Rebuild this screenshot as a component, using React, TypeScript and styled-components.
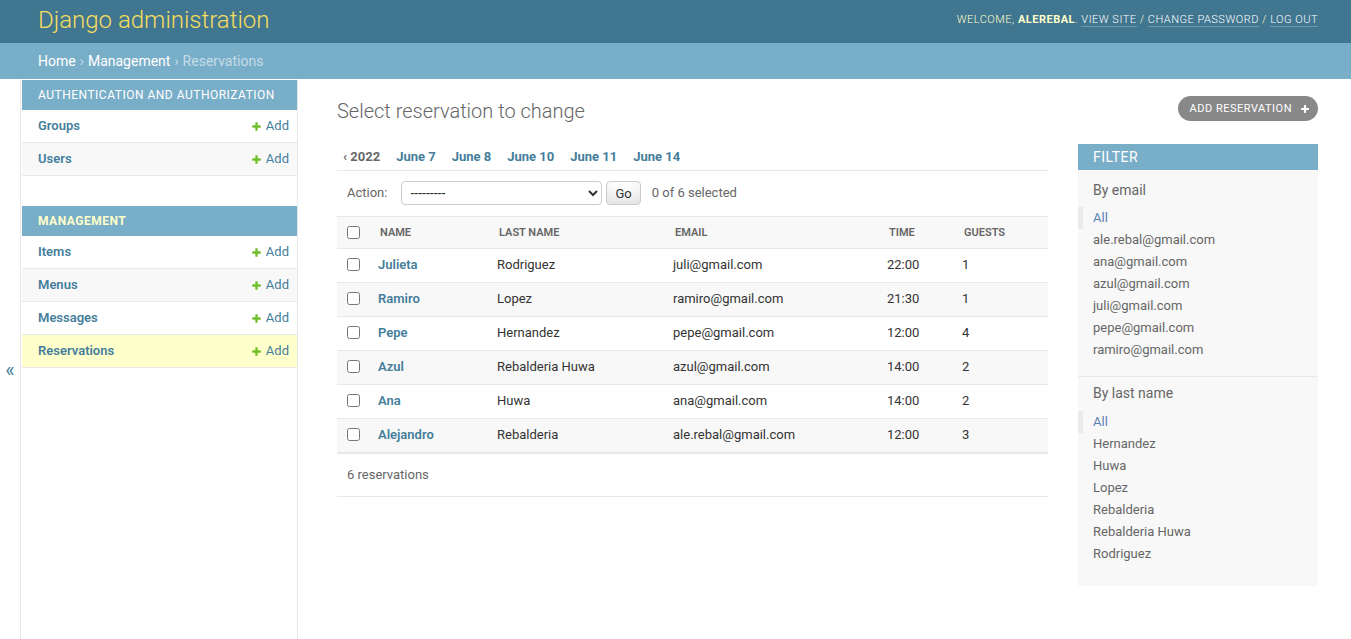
import React from 'react';
import styled, { createGlobalStyle } from 'styled-components';

const GlobalStyle = createGlobalStyle`
  html, body { margin: 0; padding: 0; }
  body {
    font-family: Roboto, "Lucida Grande", "DejaVu Sans", Verdana, Arial, sans-serif;
    font-size: 14px;
    color: #333;
    background: #fff;
  }
  * { box-sizing: border-box; }
  a { text-decoration: none; }
`;

const Header = styled.header`
  display: flex;
  justify-content: space-between;
  align-items: center;
  height: 43px;
  padding: 0 33px 4px 38px;
  background: #417690;
`;

const Brand = styled.h1`
  margin: 0;
  font-size: 24px;
  font-weight: 300;
  line-height: 28px;
  color: #f5dd5d;
`;

const UserTools = styled.div`
  font-size: 11px;
  font-weight: 300;
  letter-spacing: 0.5px;
  text-transform: uppercase;
  color: #ffc;
  line-height: 14px;
`;

const UserName = styled.strong`
  font-weight: 700;
  color: #ffc;
`;

const ToolLink = styled.a`
  color: #fff;
  border-bottom: 1px solid rgba(255, 255, 255, 0.25);
`;

const Breadcrumbs = styled.nav`
  display: flex;
  align-items: center;
  height: 36px;
  padding: 0 38px;
  background: #79aec8;
  color: #c4dce8;
  font-size: 14px;
`;

const Crumb = styled.a`
  color: #fff;
`;

const Sep = styled.span`
  margin: 0 4px;
  color: #c4dce8;
`;

const Main = styled.div`
  display: flex;
  min-height: calc(100vh - 79px);
`;

const Toggle = styled.button`
  flex: 0 0 21px;
  width: 21px;
  border: 0;
  border-right: 1px solid #e8e8e8;
  background: #fff;
  color: #447e9b;
  font-family: Roboto, sans-serif;
  font-size: 20px;
  padding: 22px 0 0 0;
  display: flex;
  align-items: center;
  justify-content: center;
`;

const NavSidebar = styled.nav`
  flex: 0 0 276px;
  margin-left: 1px;
  border-top: 1px solid transparent;
  border-right: 1px solid #e8e8e8;
`;

const Module = styled.div`
  margin-bottom: 30px;
`;

const Caption = styled.div<{ $current?: boolean }>`
  padding: 8px 16px;
  font-size: 12px;
  line-height: 14px;
  letter-spacing: 0.5px;
  text-transform: uppercase;
  white-space: nowrap;
  background: #79aec8;
  color: ${p => (p.$current ? '#ffc' : '#fff')};
  font-weight: ${p => (p.$current ? 700 : 400)};
`;

const NavRow = styled.div<{ $bg: string }>`
  display: flex;
  justify-content: space-between;
  align-items: center;
  padding: 8px 8px 8px 16px;
  line-height: 16px;
  font-size: 13px;
  border-bottom: 1px solid #e8e8e8;
  background: ${p => p.$bg};
`;

const ModelLink = styled.a`
  color: #447e9b;
  font-weight: 600;
`;

const AddLink = styled.a`
  display: inline-flex;
  align-items: center;
  gap: 4px;
  color: #447e9b;
`;

const Content = styled.main`
  flex: 1;
  min-width: 0;
  padding: 20px 33px 20px 39px;
`;

const TitleRow = styled.div`
  display: flex;
  justify-content: space-between;
  align-items: flex-start;
  margin-bottom: 21px;
`;

const Title = styled.h1`
  margin: 0;
  font-size: 20px;
  font-weight: 300;
  line-height: 24px;
  color: #666;
`;

const ObjectTool = styled.a`
  display: flex;
  align-items: center;
  gap: 8px;
  margin-top: -3px;
  height: 25px;
  padding: 0 8px 0 12px;
  border-radius: 15px;
  background: #888;
  color: #fff;
  font-size: 11px;
  letter-spacing: 0.5px;
  text-transform: uppercase;
`;

const Changelist = styled.div`
  display: flex;
  align-items: flex-start;
`;

const ListArea = styled.div`
  flex: 1;
  min-width: 0;
`;

const Toplinks = styled.ul`
  display: flex;
  gap: 16px;
  margin: 0;
  padding: 5px 6px 5px;
  list-style: none;
  line-height: 16px;
  font-size: 13px;
  font-weight: 700;
  border-bottom: 1px solid #e8e8e8;
`;

const DateLink = styled.a<{ $back?: boolean }>`
  color: ${p => (p.$back ? '#666' : '#447e9b')};
`;

const Actions = styled.div`
  display: flex;
  align-items: center;
  padding: 10px 10px 11px;
  line-height: 24px;
  font-size: 13px;
  color: #666;
`;

const ActionSelect = styled.select`
  width: 201px;
  height: 24px;
  margin-left: 14px;
  padding: 0 0 0 4px;
  border: 1px solid #ccc;
  border-radius: 4px;
  background: #fff;
  color: #333;
  font-family: Roboto, sans-serif;
  font-size: 14px;
`;

const GoButton = styled.button`
  height: 24px;
  margin-left: 4px;
  padding: 4px 8px;
  border: 1px solid #ccc;
  border-radius: 4px;
  background: #fff;
  box-shadow: 0 -15px 20px -10px rgba(0, 0, 0, 0.15) inset;
  color: #333;
  font-family: Roboto, sans-serif;
  font-size: 13px;
  line-height: 1;
`;

const Counter = styled.span`
  margin-left: 11px;
`;

const Table = styled.table`
  width: 100%;
  border-collapse: collapse;
  table-layout: fixed;
`;

const HeadCell = styled.th<{ $w: number; $center?: boolean }>`
  width: ${p => p.$w}px;
  height: 32px;
  padding: 0 10px;
  background: #f8f8f8;
  border-top: 1px solid #e8e8e8;
  border-bottom: 1px solid #e8e8e8;
  color: #666;
  font-size: 11px;
  font-weight: 600;
  text-align: ${p => (p.$center ? 'center' : 'left')};
  text-transform: uppercase;
  vertical-align: middle;
  white-space: nowrap;
`;

const Row = styled.tr<{ $even: boolean }>`
  background: ${p => (p.$even ? '#f8f8f8' : '#fff')};
`;

const Cell = styled.td<{ $center?: boolean }>`
  height: 34px;
  padding: 8px;
  border-bottom: 1px solid #e8e8e8;
  font-size: 13px;
  line-height: 16px;
  vertical-align: top;
  text-align: ${p => (p.$center ? 'center' : 'left')};
  white-space: nowrap;
`;

const NameCell = styled.th`
  padding: 8px;
  border-bottom: 1px solid #e8e8e8;
  font-size: 13px;
  line-height: 16px;
  font-weight: 600;
  text-align: left;
  vertical-align: top;
`;

const Check = styled.input`
  width: 13px;
  height: 13px;
  margin: 1px 0 0 0;
  vertical-align: top;
`;

const HeadCheck = styled.input`
  width: 13px;
  height: 13px;
  margin: -2px 0 0 0;
  vertical-align: middle;
`;

const Paginator = styled.p`
  margin: 0;
  padding: 10px;
  line-height: 22px;
  font-size: 13px;
  color: #666;
  border-top: 1px solid #e8e8e8;
  border-bottom: 1px solid #e8e8e8;
`;

const Filter = styled.aside`
  flex: 0 0 240px;
  margin-left: 30px;
  background: #f8f8f8;
`;

const FilterTitle = styled.h2`
  margin: 0 0 12px;
  padding: 5px 15px;
  line-height: 16px;
  font-size: 14px;
  font-weight: 400;
  letter-spacing: 0.5px;
  text-transform: uppercase;
  background: #79aec8;
  color: #fff;
`;

const FilterHeading = styled.h3<{ $first?: boolean }>`
  margin: ${p => (p.$first ? '0 0 9px' : '8px 0 10px')};
  padding: 0 15px;
  line-height: 16px;
  font-size: 14px;
  font-weight: 400;
  color: #666;
`;

const FilterList = styled.ul<{ $last?: boolean }>`
  margin: 0 0 ${p => (p.$last ? '6px' : '5px')};
  padding: 0 15px 15px;
  list-style: none;
  border-bottom: ${p => (p.$last ? 'none' : '1px solid #e8e8e8')};
`;

const FilterItem = styled.li<{ $selected?: boolean }>`
  padding: 1px 0 1px ${p => (p.$selected ? '10px' : '0')};
  margin-left: ${p => (p.$selected ? '-15px' : '0')};
  border-left: ${p => (p.$selected ? '5px solid #eaeaea' : 'none')};
  line-height: 20px;
  font-size: 13px;
`;

const FilterLink = styled.a<{ $selected?: boolean }>`
  display: block;
  color: ${p => (p.$selected ? '#5b80b2' : '#666')};
`;

const PlusIcon = ({ color, size }: { color: string; size: number }) => (
  <svg width={size} height={size} viewBox="0 0 1792 1792" aria-hidden="true">
    <path
      fill={color}
      d="M1600 796v192q0 40-28 68t-68 28h-416v416q0 40-28 68t-68 28h-192q-40 0-68-28t-28-68v-416h-416q-40 0-68-28t-28-68v-192q0-40 28-68t68-28h416v-416q0-40 28-68t68-28h192q40 0 68 28t28 68v416h416q40 0 68 28t28 68z"
    />
  </svg>
);

const navModules = [
  { title: 'Authentication and Authorization', current: false, models: ['Groups', 'Users'] },
  { title: 'Management', current: true, models: ['Items', 'Menus', 'Messages', 'Reservations'] },
];

const reservations = [
  ['Julieta', 'Rodriguez', 'juli@gmail.com', '22:00', '1'],
  ['Ramiro', 'Lopez', 'ramiro@gmail.com', '21:30', '1'],
  ['Pepe', 'Hernandez', 'pepe@gmail.com', '12:00', '4'],
  ['Azul', 'Rebalderia Huwa', 'azul@gmail.com', '14:00', '2'],
  ['Ana', 'Huwa', 'ana@gmail.com', '14:00', '2'],
  ['Alejandro', 'Rebalderia', 'ale.rebal@gmail.com', '12:00', '3'],
];

const columns: { label: string; w: number }[] = [
  { label: 'Name', w: 119 },
  { label: 'Last name', w: 176 },
  { label: 'Email', w: 214 },
  { label: 'Time', w: 75 },
  { label: 'Guests', w: 94 },
];

const filters = [
  {
    title: 'By email',
    items: ['ale.rebal@gmail.com', 'ana@gmail.com', 'azul@gmail.com', 'juli@gmail.com', 'pepe@gmail.com', 'ramiro@gmail.com'],
  },
  {
    title: 'By last name',
    items: ['Hernandez', 'Huwa', 'Lopez', 'Rebalderia', 'Rebalderia Huwa', 'Rodriguez'],
  },
];

export default function App() {
  return (
    <>
      <GlobalStyle />
      <Header>
        <Brand>Django administration</Brand>
        <UserTools>
          Welcome, <UserName>alerebal</UserName>. <ToolLink href="#">View site</ToolLink> /{' '}
          <ToolLink href="#">Change password</ToolLink> / <ToolLink href="#">Log out</ToolLink>
        </UserTools>
      </Header>
      <Breadcrumbs>
        <Crumb href="#">Home</Crumb>
        <Sep>›</Sep>
        <Crumb href="#">Management</Crumb>
        <Sep>›</Sep>
        <span>Reservations</span>
      </Breadcrumbs>
      <Main>
        <Toggle aria-label="Toggle navigation">«</Toggle>
        <NavSidebar>
          {navModules.map(m => (
            <Module key={m.title}>
              <Caption $current={m.current}>{m.title}</Caption>
              {m.models.map((model, i) => (
                <NavRow
                  key={model}
                  $bg={model === 'Reservations' ? '#ffc' : i % 2 === 1 ? '#f8f8f8' : '#fff'}
                >
                  <ModelLink href="#">{model}</ModelLink>
                  <AddLink href="#">
                    <PlusIcon color="#70bf2b" size={11} />
                    Add
                  </AddLink>
                </NavRow>
              ))}
            </Module>
          ))}
        </NavSidebar>
        <Content>
          <TitleRow>
            <Title>Select reservation to change</Title>
            <ObjectTool href="#">
              Add reservation
              <PlusIcon color="#fff" size={10} />
            </ObjectTool>
          </TitleRow>
          <Changelist>
            <ListArea>
              <Toplinks>
                <li>
                  <DateLink $back href="#">‹ 2022</DateLink>
                </li>
                {['June 7', 'June 8', 'June 10', 'June 11', 'June 14'].map(d => (
                  <li key={d}>
                    <DateLink href="#">{d}</DateLink>
                  </li>
                ))}
              </Toplinks>
              <Actions>
                <label>Action:</label>
                <ActionSelect defaultValue="">
                  <option value="">---------</option>
                  <option value="delete">Delete selected reservations</option>
                </ActionSelect>
                <GoButton type="button">Go</GoButton>
                <Counter>0 of 6 selected</Counter>
              </Actions>
              <Table>
                <thead>
                  <tr>
                    <HeadCell $w={33} $center>
                      <HeadCheck type="checkbox" />
                    </HeadCell>
                    {columns.map(c => (
                      <HeadCell key={c.label} $w={c.w}>
                        {c.label}
                      </HeadCell>
                    ))}
                  </tr>
                </thead>
                <tbody>
                  {reservations.map((r, i) => (
                    <Row key={r[0]} $even={i % 2 === 1}>
                      <Cell $center>
                        <Check type="checkbox" />
                      </Cell>
                      <NameCell>
                        <ModelLink href="#">{r[0]}</ModelLink>
                      </NameCell>
                      <Cell>{r[1]}</Cell>
                      <Cell>{r[2]}</Cell>
                      <Cell>{r[3]}</Cell>
                      <Cell>{r[4]}</Cell>
                    </Row>
                  ))}
                </tbody>
              </Table>
              <Paginator>6 reservations</Paginator>
            </ListArea>
            <Filter>
              <FilterTitle>Filter</FilterTitle>
              {filters.map((f, fi) => (
                <React.Fragment key={f.title}>
                  <FilterHeading $first={fi === 0}>{f.title}</FilterHeading>
                  <FilterList $last={fi === filters.length - 1}>
                    <FilterItem $selected>
                      <FilterLink $selected href="#">All</FilterLink>
                    </FilterItem>
                    {f.items.map(it => (
                      <FilterItem key={it}>
                        <FilterLink href="#">{it}</FilterLink>
                      </FilterItem>
                    ))}
                  </FilterList>
                </React.Fragment>
              ))}
            </Filter>
          </Changelist>
        </Content>
      </Main>
    </>
  );
}
